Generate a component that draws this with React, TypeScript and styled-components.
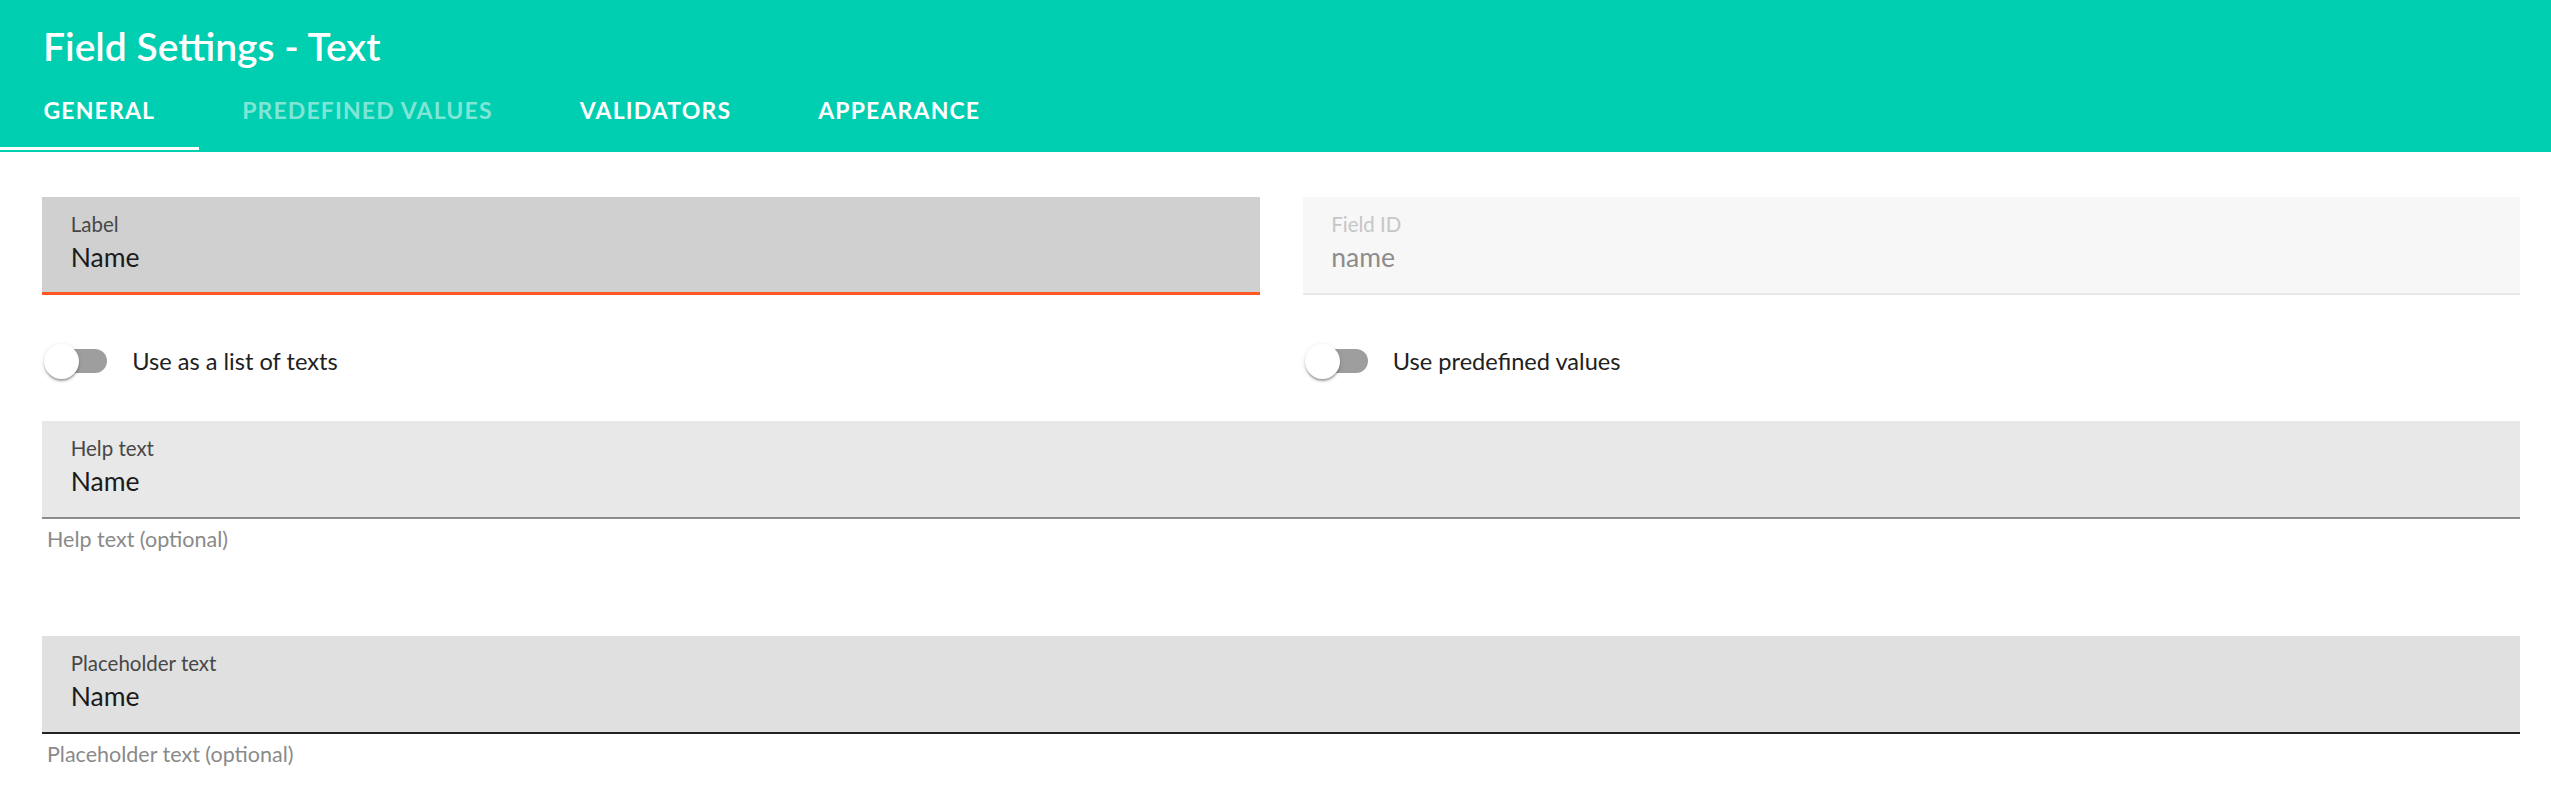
import React from "react";
import styled, { createGlobalStyle } from "styled-components";

const GlobalStyle = createGlobalStyle`
  html, body { margin: 0; padding: 0; background: #ffffff; }
  body {
    font-family: Lato, "Liberation Sans", Arial, sans-serif;
    -webkit-font-smoothing: antialiased;
  }
  * { box-sizing: border-box; }
`;

const Page = styled.div`
  width: 2551px;
  min-height: 804px;
  background: #ffffff;
`;

const Header = styled.header`
  background: #00ceb0;
  padding-top: 18px;
  padding-bottom: 2px;
  display: flex;
  flex-direction: column;
`;

const Title = styled.h1`
  margin: 0;
  padding-left: 43px;
  font-size: 39px;
  line-height: 56px;
  font-weight: 600;
  color: #ffffff;
`;

const TabList = styled.nav`
  display: flex;
  height: 76px;
`;

const Tab = styled.div<{ $active?: boolean; $disabled?: boolean }>`
  position: relative;
  display: flex;
  align-items: center;
  padding: 0 43.5px 5px;
  font-size: 23px;
  font-weight: 700;
  letter-spacing: 1.15px;
  text-transform: uppercase;
  white-space: nowrap;
  color: ${(p) => (p.$disabled ? "rgba(255,255,255,0.5)" : "#ffffff")};

  &::after {
    content: "";
    position: absolute;
    left: 0;
    right: 0;
    bottom: 0;
    height: 3px;
    background: #ffffff;
    display: ${(p) => (p.$active ? "block" : "none")};
  }
`;

const Main = styled.main`
  padding: 45px 31px 0 42px;
  display: flex;
  flex-direction: column;
`;

const TwoCol = styled.div`
  display: grid;
  grid-template-columns: 1fr 1fr;
  column-gap: 43px;
`;

const ToggleGrid = styled(TwoCol)`
  margin: 42px 0 36px;
`;

const Section = styled.section<{ $gap?: number }>`
  display: flex;
  flex-direction: column;
  margin-top: ${(p) => p.$gap ?? 0}px;
`;

const FieldBox = styled.div<{ $bg: string; $line: string; $lineWidth: number }>`
  height: 98px;
  background: ${(p) => p.$bg};
  border-bottom: ${(p) => p.$lineWidth}px solid ${(p) => p.$line};
  padding: 17px 28.7px 0;
  display: flex;
  flex-direction: column;
`;

const FieldLabel = styled.label<{ $color: string }>`
  font-size: 20.5px;
  line-height: 20px;
  color: ${(p) => p.$color};
`;

const FieldValue = styled.div<{ $color: string }>`
  margin-top: 8px;
  font-size: 26.5px;
  line-height: 30px;
  color: ${(p) => p.$color};
`;

const Helper = styled.div`
  margin: 8px 0 0 5px;
  font-size: 21.5px;
  line-height: 24px;
  color: #8a8a8a;
`;

const ToggleRow = styled.div`
  height: 48px;
  display: flex;
  align-items: center;
`;

const SwitchWrap = styled.span`
  position: relative;
  flex: none;
  width: 66px;
  height: 35px;
`;

const Track = styled.span`
  position: absolute;
  left: 7px;
  top: 5.5px;
  width: 58px;
  height: 24px;
  border-radius: 12px;
  background: #9e9e9e;
`;

const Thumb = styled.span`
  position: absolute;
  left: 2px;
  top: 0;
  width: 35px;
  height: 35px;
  border-radius: 50%;
  background: #ffffff;
  box-shadow: 0 3px 2px -1px rgba(0, 0, 0, 0.2), 0 2px 2px 0 rgba(0, 0, 0, 0.14),
    0 1px 5px 0 rgba(0, 0, 0, 0.12);
`;

const ToggleLabel = styled.span`
  margin-left: 24.3px;
  font-size: 23.6px;
  line-height: 30px;
  color: #212121;
`;

type FieldProps = {
  label: string;
  value: string;
  bg: string;
  line: string;
  lineWidth: number;
  labelColor?: string;
  valueColor?: string;
};

const Field = ({ label, value, bg, line, lineWidth, labelColor = "#474747", valueColor = "#1a1a1a" }: FieldProps) => (
  <FieldBox $bg={bg} $line={line} $lineWidth={lineWidth}>
    <FieldLabel $color={labelColor}>{label}</FieldLabel>
    <FieldValue $color={valueColor}>{value}</FieldValue>
  </FieldBox>
);

const Toggle = ({ label }: { label: string }) => (
  <ToggleRow>
    <SwitchWrap>
      <Track />
      <Thumb />
    </SwitchWrap>
    <ToggleLabel>{label}</ToggleLabel>
  </ToggleRow>
);

export default function App() {
  return (
    <Page>
      <GlobalStyle />
      <Header>
        <Title>Field Settings - Text</Title>
        <TabList>
          <Tab $active>General</Tab>
          <Tab $disabled>Predefined Values</Tab>
          <Tab>Validators</Tab>
          <Tab>Appearance</Tab>
        </TabList>
      </Header>
      <Main>
        <TwoCol>
          <Field label="Label" value="Name" bg="#d0d0d0" line="#ff5722" lineWidth={3} />
          <Field
            label="Field ID"
            value="name"
            bg="#f7f7f7"
            line="#e8e8e8"
            lineWidth={2}
            labelColor="#c6c6c6"
            valueColor="#8c8c8c"
          />
        </TwoCol>
        <ToggleGrid>
          <Toggle label="Use as a list of texts" />
          <Toggle label="Use predefined values" />
        </ToggleGrid>
        <Section>
          <Field label="Help text" value="Name" bg="#e8e8e8" line="#8c8c8c" lineWidth={2} />
          <Helper>Help text (optional)</Helper>
        </Section>
        <Section $gap={85}>
          <Field label="Placeholder text" value="Name" bg="#e0e0e0" line="#222222" lineWidth={2} />
          <Helper>Placeholder text (optional)</Helper>
        </Section>
      </Main>
    </Page>
  );
}
